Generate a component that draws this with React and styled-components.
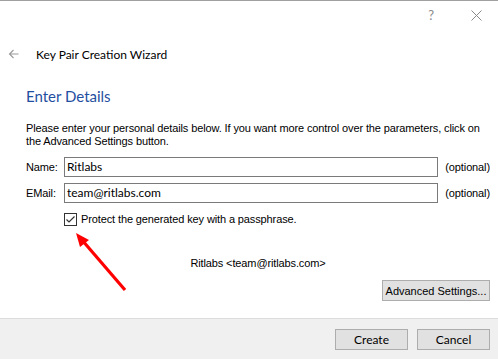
import React from 'react';
import styled, { createGlobalStyle } from 'styled-components';

const GlobalStyle = createGlobalStyle`
  html, body {
    margin: 0;
    padding: 0;
    background: #fff;
  }
  * {
    box-sizing: border-box;
  }
`;

const uiFont = '"Lato", "Noto Sans", sans-serif';

const Window = styled.div`
  position: relative;
  width: 498px;
  height: 359px;
  display: flex;
  flex-direction: column;
  background: #fff;
  font-family: "Liberation Sans", Arial, sans-serif;
  font-size: 11px;
  letter-spacing: -0.12px;
  color: #000;
  overflow: hidden;
`;

const TitleBar = styled.div`
  height: 30px;
  border-top: 1px solid #a0a0a0;
  display: flex;
  justify-content: flex-end;
  align-items: center;
  padding-right: 16px;
  gap: 37px;
`;

const HelpMark = styled.span`
  font-family: ${uiFont};
  font-size: 13px;
  color: #8a8a8a;
  line-height: 1;
`;

const Header = styled.div`
  height: 48px;
  display: flex;
  align-items: center;
  padding-left: 8px;
  gap: 17px;
`;

const Title = styled.span`
  font-family: ${uiFont};
  font-size: 12px;
  letter-spacing: 0;
  color: #000;
`;

const Content = styled.div`
  flex: 1;
  display: flex;
  flex-direction: column;
  padding: 0 8px 0 26px;
`;

const Heading = styled.div`
  margin-top: 8px;
  height: 20px;
  line-height: 20px;
  font-family: ${uiFont};
  font-size: 15px;
  letter-spacing: 0;
  color: #1f4f9f;
`;

const Intro = styled.p`
  margin: 16px 0 0;
  line-height: 13px;
`;

const FieldRow = styled.div`
  display: flex;
  align-items: center;
  height: 20px;
  margin-top: ${(p) => p.gap}px;
`;

const Label = styled.span`
  width: 38px;
`;

const TextInput = styled.div`
  width: 375px;
  height: 20px;
  border: 1px solid #7a7a7a;
  padding-left: 2px;
  line-height: 18px;
  font-family: ${uiFont};
  font-size: 12px;
  letter-spacing: 0;
`;

const Optional = styled.span`
  margin-left: 7px;
`;

const CheckRow = styled.label`
  display: flex;
  align-items: center;
  gap: 4px;
  margin: 9px 0 0 38px;
  height: 14px;
`;

const Summary = styled.div`
  margin-top: 30px;
  text-align: center;
  line-height: 14px;
`;

const ButtonRow = styled.div`
  display: flex;
  justify-content: flex-end;
  margin-top: 10px;
`;

const Button = styled.button`
  width: ${(p) => p.width || 73}px;
  height: 21px;
  padding: 0;
  border: 1px solid #adadad;
  background: #e1e1e1;
  font-family: ${(p) => (p.segoe ? uiFont : '"Liberation Sans", Arial, sans-serif')};
  font-size: ${(p) => (p.segoe ? 12 : 11)}px;
  letter-spacing: 0;
  color: #000;
`;

const Footer = styled.div`
  height: 41px;
  border-top: 1px solid #dcdcdc;
  background: #f0f0f0;
  display: flex;
  justify-content: flex-end;
  align-items: flex-start;
  padding: 10px 8px 0 0;
  gap: 9px;
`;

const ArrowOverlay = styled.svg`
  position: absolute;
  left: 0;
  top: 0;
  pointer-events: none;
`;

const BackArrow = () => (
  <svg width="11" height="10" viewBox="0 0 11 10">
    <path d="M10.5 5H1.5M5.5 1L1.5 5L5.5 9" fill="none" stroke="#9a9a9a" strokeWidth="1.1" />
  </svg>
);

const CloseIcon = () => (
  <svg width="11" height="11" viewBox="0 0 11 11">
    <path d="M0.5 0.5L10.5 10.5M10.5 0.5L0.5 10.5" fill="none" stroke="#8a8a8a" strokeWidth="1" />
  </svg>
);

const CheckBox = () => (
  <svg width="13" height="13" viewBox="0 0 13 13">
    <rect x="0.5" y="0.5" width="12" height="12" fill="#fff" stroke="#333" />
    <path d="M2.5 6.5L5 9L10.5 3.5" fill="none" stroke="#333" strokeWidth="1.2" />
  </svg>
);

export default function App() {
  return (
    <>
      <GlobalStyle />
      <Window>
        <TitleBar>
          <HelpMark>?</HelpMark>
          <CloseIcon />
        </TitleBar>
        <Header>
          <BackArrow />
          <Title>Key Pair Creation Wizard</Title>
        </Header>
        <Content>
          <Heading>Enter Details</Heading>
          <Intro>
            Please enter your personal details below. If you want more control over the parameters, click on
            the Advanced Settings button.
          </Intro>
          <FieldRow gap={9}>
            <Label>Name:</Label>
            <TextInput>Ritlabs</TextInput>
            <Optional>(optional)</Optional>
          </FieldRow>
          <FieldRow gap={6}>
            <Label>EMail:</Label>
            <TextInput>team@ritlabs.com</TextInput>
            <Optional>(optional)</Optional>
          </FieldRow>
          <CheckRow>
            <CheckBox />
            Protect the generated key with a passphrase.
          </CheckRow>
          <Summary>Ritlabs &lt;team@ritlabs.com&gt;</Summary>
          <ButtonRow>
            <Button width={108}>Advanced Settings...</Button>
          </ButtonRow>
        </Content>
        <Footer>
          <Button segoe>Create</Button>
          <Button segoe>Cancel</Button>
        </Footer>
        <ArrowOverlay width="498" height="359">
          <line x1="125" y1="290" x2="82" y2="240" stroke="#ff0000" strokeWidth="3.2" />
          <polygon points="76,233 89,240 80,247" fill="#ff0000" />
        </ArrowOverlay>
      </Window>
    </>
  );
}
